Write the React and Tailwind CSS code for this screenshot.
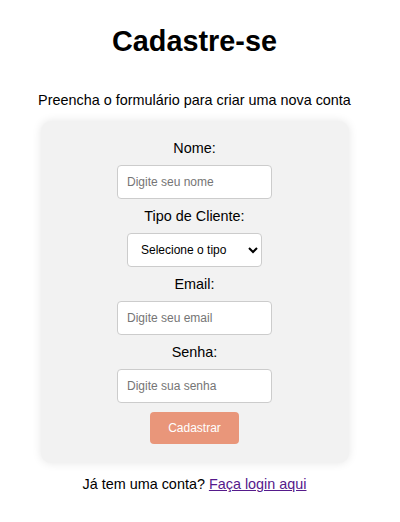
import React from "react";

const Field = ({ label, placeholder, type = "text" }) => {
  return (
    <>
      <label className="block mb-[8.5px] text-[14.4px] leading-[16.5px] text-black">
        {label}
      </label>
      <input
        type={type}
        placeholder={placeholder}
        className="mb-[9px] w-[155px] h-[34px] px-[9px] rounded-[4px] border border-[#cccccc] bg-white text-[12px] text-black placeholder:text-[#757575] outline-none"
      />
    </>
  );
};

const App = () => {
  return (
    <div
      className="w-[389px] min-h-[522px] bg-white flex flex-col items-center text-black"
      style={{ fontFamily: '"Liberation Sans", Arial, sans-serif' }}
    >
      <h1 className="mt-[25px] text-[28.8px] leading-[33px] font-bold">
        Cadastre-se
      </h1>
      <p className="mt-[34px] text-[14.4px] leading-[16.5px]">
        Preencha o formulário para criar uma nova conta
      </p>
      <div className="mt-[12px] w-[308px] flex flex-col items-center pt-[19px] pb-[19px] bg-[#f2f2f2] rounded-[10px] shadow-[0_0_10px_rgba(0,0,0,0.1)]">
        <Field label="Nome:" placeholder="Digite seu nome" />
        <label className="block mb-[8.5px] text-[14.4px] leading-[16.5px]">
          Tipo de Cliente:
        </label>
        <select
          defaultValue=""
          className="mb-[9px] w-[135px] h-[34px] pl-[9px] pr-[4px] rounded-[4px] border border-[#cccccc] bg-white text-[12px] text-black"
        >
          <option value="" disabled>
            Selecione o tipo
          </option>
          <option value="pf">Pessoa Física</option>
          <option value="pj">Pessoa Jurídica</option>
        </select>
        <Field label="Email:" placeholder="Digite seu email" type="email" />
        <Field label="Senha:" placeholder="Digite sua senha" type="password" />
        <button className="w-[89px] h-[32px] rounded-[4px] bg-[#e9967a] text-white text-[12px] leading-[14px]">
          Cadastrar
        </button>
      </div>
      <p className="mt-[13px] text-[14.4px] leading-[16.5px]">
        Já tem uma conta?{" "}
        <a href="#login" className="text-[#551a8b] underline">
          Faça login aqui
        </a>
      </p>
    </div>
  );
};

export default App;
